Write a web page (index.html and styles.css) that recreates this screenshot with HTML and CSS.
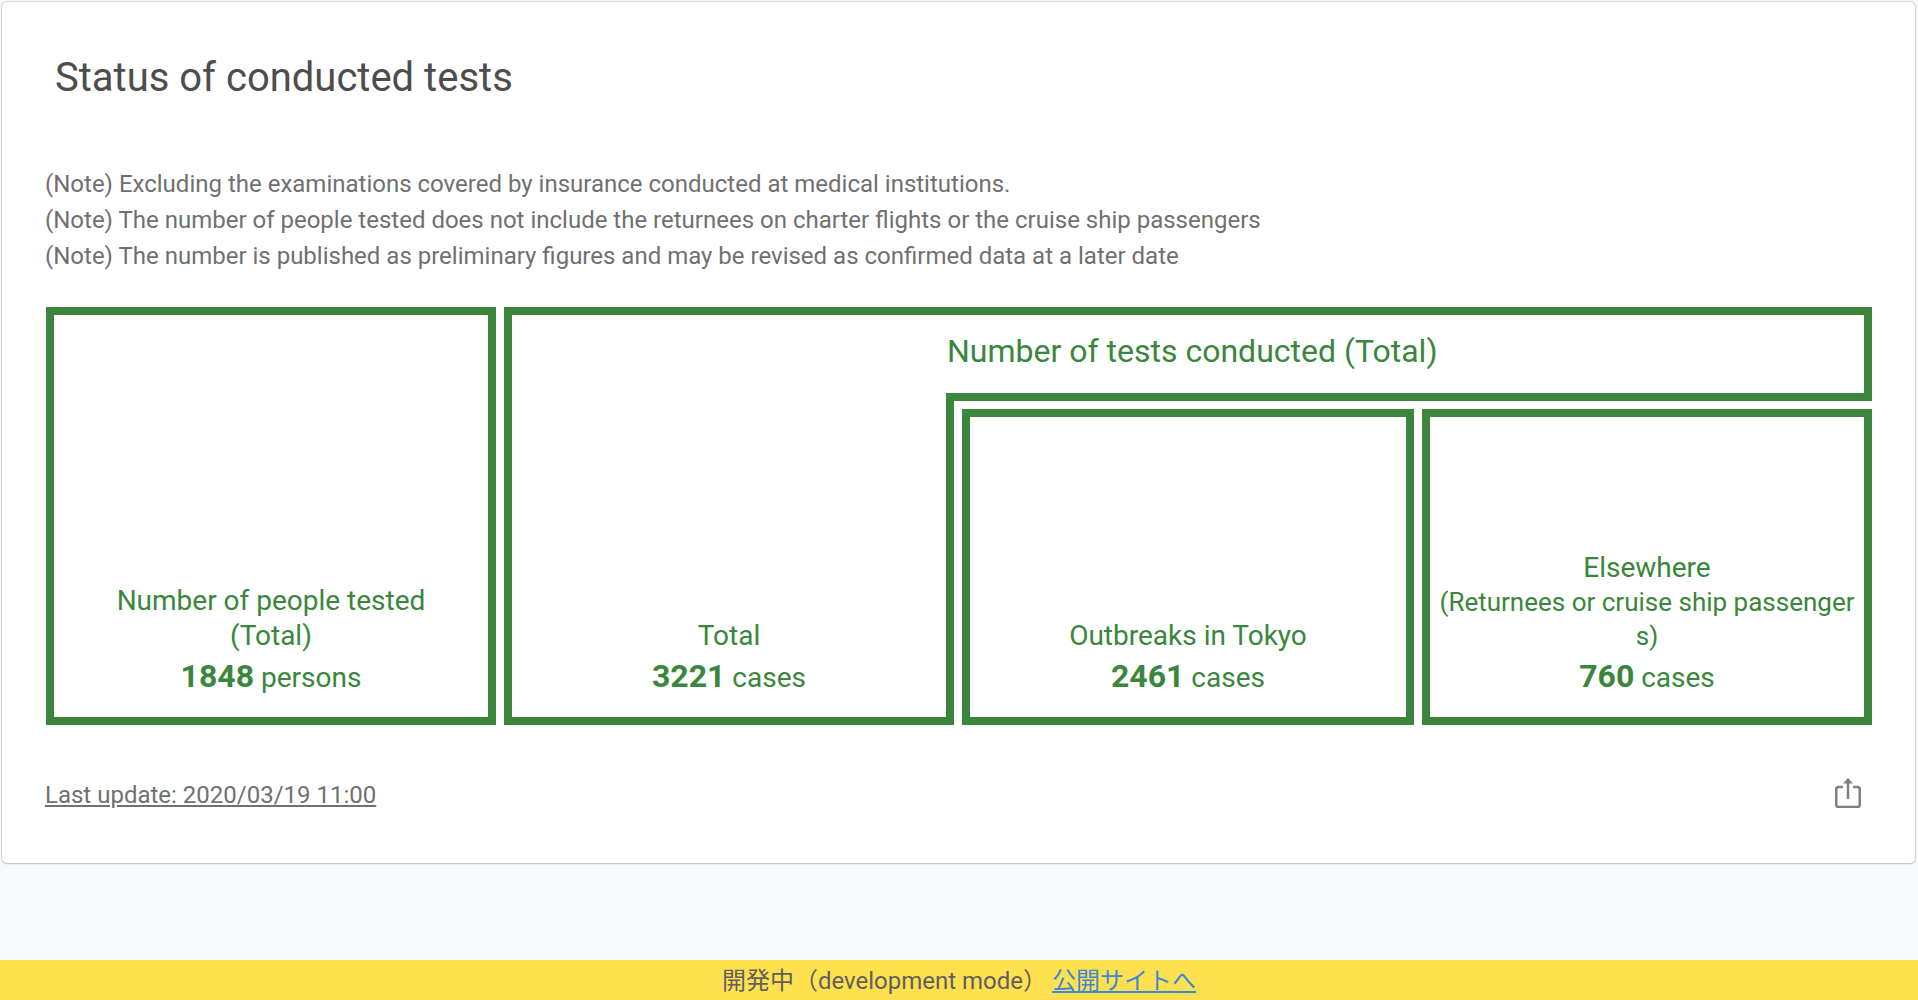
FILE: index.html
```html
<!DOCTYPE html>
<html lang="en">
<head>
    <meta charset="UTF-8">
    <meta name="viewport" content="width=device-width, initial-scale=1.0">
    <title>Status of conducted tests</title>
    <link rel="stylesheet" href="styles.css">
</head>
<body>
    <main class="page">
        <section class="card">
            <h1 class="card-title">Status of conducted tests</h1>
            <ul class="notes">
                <li>(Note) Excluding the examinations covered by insurance conducted at medical institutions.</li>
                <li>(Note) The number of people tested does not include the returnees on charter flights or the cruise ship passengers</li>
                <li>(Note) The number is published as preliminary figures and may be revised as confirmed data at a later date</li>
            </ul>
            <div class="boxes">
                <div class="box box-people">
                    <span class="label">Number of people tested<br>(Total)</span>
                    <span class="count"><strong>1848</strong> persons</span>
                </div>
                <div class="box box-total">
                    <span class="label">Total</span>
                    <span class="count"><strong>3221</strong> cases</span>
                </div>
                <div class="tests-head">Number of tests conducted (Total)</div>
                <div class="tests-body">
                    <div class="box">
                        <span class="label">Outbreaks in Tokyo</span>
                        <span class="count"><strong>2461</strong> cases</span>
                    </div>
                    <div class="box">
                        <span class="label">Elsewhere<small>(Returnees or cruise ship passengers)</small></span>
                        <span class="count"><strong>760</strong> cases</span>
                    </div>
                </div>
            </div>
            <div class="card-foot">
                <a class="updated" href="#">Last update: 2020/03/19 11:00</a>
                <svg class="share" viewBox="0 0 26 30" width="26" height="30" aria-hidden="true">
                    <path d="M8 9H3.500a2.250 2.250 0 0 0-2.250 2.250v15.500a2.250 2.250 0 0 0 2.250 2.250h19a2.250 2.250 0 0 0 2.250-2.250v-15.500a2.250 2.250 0 0 0-2.250-2.250H18" fill="none" stroke="#808080" stroke-width="2.500"/>
                    <path d="M13 4v17" fill="none" stroke="#808080" stroke-width="2.500"/>
                    <path d="M13 0l5 5.500H8z" fill="#808080"/>
                </svg>
            </div>
        </section>
    </main>
    <footer class="devbar">
        <span>開発中（development mode）</span>
        <a href="#">公開サイトへ</a>
    </footer>
</body>
</html>
```

FILE: styles.css
```css
*{
    margin: 0;
    padding: 0;
    box-sizing: border-box;
}
body{
    background-color: #f8f9fa;
    font-family: Roboto, "Noto Sans CJK JP", sans-serif;
    height: 100vh;
    display: flex;
    flex-direction: column;
    overflow: hidden;
}
.page{
    flex: 1;
    padding: 2px 3px 0 2px;
}
.card{
    background-color: #fff;
    height: 861px;
    border-radius: 5px;
    box-shadow: 0 0 1px 1px rgba(0, 0, 0, 0.14), 0 1px 2px rgba(0, 0, 0, 0.12);
    padding: 0 43px 0 44px;
}
.card-title{
    font-size: 40px;
    font-weight: 400;
    color: #4d4d4d;
    line-height: 48px;
    padding: 52px 0 0 9px;
}
.notes{
    list-style: none;
    margin: 64px 0 0 -1px;
    font-size: 24px;
    line-height: 36px;
    color: #707070;
}
.boxes{
    display: grid;
    grid-template-columns: 450px 450px 1fr;
    grid-template-rows: 94px 324px;
    margin-top: 33px;
    color: #3a863c;
    font-size: 28px;
    line-height: 35px;
    text-align: center;
}
.box{
    border: 8px solid #3b863c;
    display: flex;
    flex-direction: column;
    justify-content: flex-end;
    padding: 0 8px 19px;
    word-break: break-all;
}
.label{
    margin-bottom: 3px;
}
.label small{
    display: block;
    font-size: 26px;
    line-height: 34px;
}
.count{
    line-height: 40px;
}
.count strong{
    font-size: 32px;
    font-weight: 700;
}
.box-people{
    grid-row: 1 / 3;
}
.box-total{
    grid-row: 1 / 3;
    margin-left: 8px;
    border-right: 0;
}
.tests-head{
    border: 8px solid #3b863c;
    border-left: 0;
    padding-left: 1px;
    text-align: left;
    font-size: 32px;
    line-height: 72px;
}
.tests-body{
    border-left: 8px solid #3b863c;
    padding: 8px 0 0 8px;
    display: grid;
    grid-template-columns: 452px 1fr;
    column-gap: 8px;
}
.card-foot{
    display: flex;
    justify-content: space-between;
    align-items: flex-start;
    margin-top: 53px;
}
.updated{
    font-size: 24px;
    line-height: 34px;
    margin-left: -1px;
    color: #707070;
}
.share{
    margin-right: 11px;
}
.devbar{
    height: 40px;
    background-color: #ffe150;
    display: flex;
    justify-content: center;
    align-items: center;
    gap: 4px;
    font-size: 24px;
    color: #5f5f5f;
    padding-bottom: 3px;
}
.devbar a{
    margin-left: 1px;
    color: #3d87d8;
}
```
